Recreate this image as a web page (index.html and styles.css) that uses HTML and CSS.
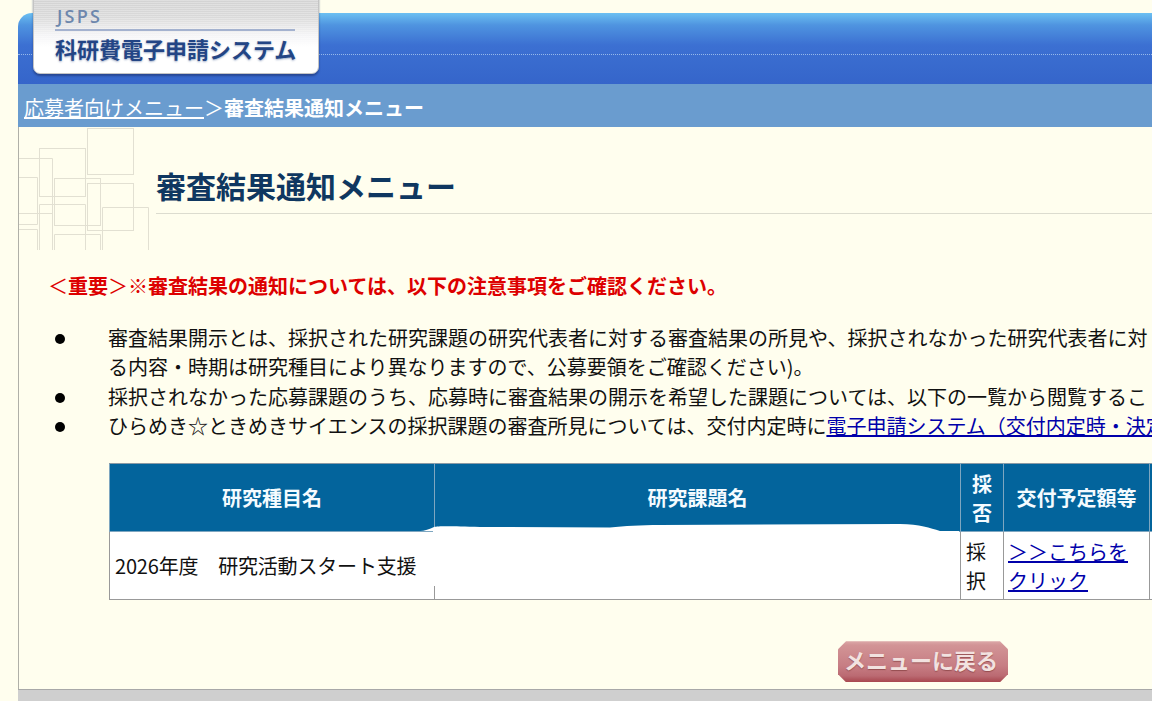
FILE: index.html
```html
<!DOCTYPE html>
<html lang="ja">
<head>
<meta charset="utf-8">
<title>審査結果通知メニュー</title>
<link rel="stylesheet" href="styles.css">
</head>
<body>
<div class="page">
  <header class="banner">
    <div class="logo">
      <div class="logo-org">JSPS</div>
      <div class="logo-name">科研費電子申請システム</div>
    </div>
    <div class="banner-dots"></div>
  </header>
  <nav class="crumbs"><a href="#">応募者向けメニュー</a>＞<strong>審査結果通知メニュー</strong></nav>
  <main class="content">
    <div class="title-row">
      <svg class="title-art" width="131" height="123" viewBox="0 0 131 123" fill="none" stroke="#e2e0d2" stroke-width="1">
        <rect x="68.5" y="1.5" width="46" height="46"/>
        <rect x="20.5" y="21.5" width="46" height="48"/>
        <path d="M0 31.5H33.5V123M0 86.5H33.5M0 50.5H18.5V97.5H0M0 102.5H18.5V123"/>
        <rect x="35.5" y="51.5" width="46" height="47"/>
        <rect x="68.5" y="56.5" width="46" height="47"/>
        <path d="M83.5 123V80.5H129.5V123M20.5 123V77.5H66.5V123M35.5 123V107.5H81.5V123"/>
      </svg>
      <h1 class="title">審査結果通知メニュー</h1>
    </div>
    <p class="notice"><span class="thin">＜</span>重要<span class="thin">＞※</span>審査結果の通知については、以下の注意事項をご確認ください。</p>
    <ul class="notes">
      <li><div>審査結果開示とは、採択された研究課題の研究代表者に対する審査結果の所見や、採択されなかった研究代表者に対<br>る内容・時期は研究種目により異なりますので、公募要領をご確認ください)。</div></li>
      <li><div>採択されなかった応募課題のうち、応募時に審査結果の開示を希望した課題については、以下の一覧から閲覧するこ</div></li>
      <li><div>ひらめき☆ときめきサイエンスの採択課題の審査所見については、交付内定時に<a href="#">電子申請システム（交付内定時・決定</a></div></li>
    </ul>
    <div class="table-wrap">
      <table class="results">
        <colgroup>
          <col class="c-type"><col class="c-name"><col class="c-res"><col class="c-amt"><col class="c-more">
        </colgroup>
        <thead>
          <tr><th>研究種目名</th><th>研究課題名</th><th>採否</th><th>交付予定額等</th><th></th></tr>
        </thead>
        <tbody>
          <tr>
            <td class="type-name">2026年度　研究活動スタート支援</td>
            <td></td>
            <td>採択</td>
            <td class="amount"><a href="#">＞＞こちらをクリック</a></td>
            <td></td>
          </tr>
        </tbody>
      </table>
      <svg class="redaction" width="540" height="76" viewBox="0 0 540 76">
        <path fill="#fff" d="M0 8C4 8 10 6 14 4C18 3 30 3 60 4L190 4.5C205 3 220 2 240 2L480 1C500 1 510 5 520 8L539 8L539 76L15.5 76L15.5 63L13 63L13 8Z"/>
      </svg>
    </div>
    <a class="back" href="#">メニューに戻る</a>
  </main>
  <footer class="foot"></footer>
</div>
</body>
</html>
```

FILE: styles.css
```css
html, body {
  margin: 0;
  height: 701px;
  overflow: hidden;
  background: #fffeee;
}
body {
  font-family: "Noto Sans CJK JP", "Noto Sans", sans-serif;
  font-size: 20px;
  color: #111;
}
.page {
  width: 1400px;
  margin-left: 18px;
  padding-top: 13px;
}
.banner {
  position: relative;
  height: 71px;
  border-top-left-radius: 14px;
  background: linear-gradient(#6cc0f2 0, #4f94e0 12px, #3c70d2 32px, #3565ca 71px);
}
.banner-dots {
  height: 41px;
  border-bottom: 1px dotted rgba(190, 215, 245, .7);
}
.logo {
  position: absolute;
  left: 15px;
  top: -25px;
  width: 286px;
  height: 86px;
  box-sizing: border-box;
  padding: 15px 22px 0 21px;
  border: 1px solid #c4c4c4;
  border-radius: 7px;
  background:
    repeating-linear-gradient(0deg, rgba(255,255,255,.28) 0 1px, transparent 1px 2px),
    linear-gradient(#cfcfcf 0, #d9d9d9 28px, #f4f4f6 46px, #fff 58px);
  box-shadow: 0 2px 2px rgba(30, 50, 110, .6);
}
.logo-org {
  font-family: "Open Sans", sans-serif;
  font-size: 18px;
  font-weight: 600;
  line-height: 25px;
  letter-spacing: 2.2px;
  color: #6d87ad;
  padding-left: 2px;
  border-bottom: 2px solid #a4b2cf;
  margin-right: 1px;
}
.logo-name {
  font-size: 22px;
  font-weight: 700;
  line-height: 34px;
  white-space: nowrap;
  color: #234585;
  text-shadow: 0 1px 2px rgba(40, 70, 130, .45);
}
.crumbs {
  height: 43px;
  line-height: 47px;
  padding-left: 6px;
  background: #6a9ccf;
  color: #fff;
  white-space: nowrap;
}
.crumbs a { color: #fff; }
.content {
  height: 562px;
  border-left: 1px solid #b0b0a8;
}
.title-row {
  display: flex;
  align-items: flex-start;
  height: 123px;
}
.title-art {
  flex: none;
  display: block;
  margin-right: 6px;
}
.title {
  flex: 1;
  margin: 0;
  height: 87px;
  box-sizing: border-box;
  padding-top: 36px;
  border-bottom: 1px solid #dcdccf;
  font-size: 30px;
  font-weight: 700;
  line-height: 44px;
  color: #0f3760;
  white-space: nowrap;
}
.notice {
  margin: 21px 0 0 29px;
  line-height: 30px;
  font-weight: 700;
  color: #dd0000;
  white-space: nowrap;
}
.thin { font-weight: 400; }
.notes {
  margin: 22px 0 0;
  padding: 0;
  list-style: none;
  line-height: 29.3px;
  white-space: nowrap;
}
.notes li {
  display: grid;
  grid-template-columns: 89px 1fr;
}
.notes li::before {
  content: "";
  width: 10px;
  height: 10px;
  margin: 11px 0 0 36px;
  border-radius: 50%;
  background: #000;
}
.notes a { color: #0000aa; }
.table-wrap {
  position: relative;
  margin: 23px 0 0 90px;
  width: 1200px;
}
.results {
  table-layout: fixed;
  border-collapse: collapse;
  width: 1200px;
  background: #fff;
}
.c-type { width: 325px; }
.c-name { width: 526px; }
.c-res { width: 43px; }
.c-amt { width: 146px; }
.results th, .results td {
  border: 1px solid #999;
  padding: 0 5px;
  line-height: 29px;
}
.results th {
  height: 68px;
  box-sizing: border-box;
  background: #03649c;
  color: #f4fbff;
  font-weight: 700;
  border-color: #7ea6c0;
  border-top-color: #8a9aa5;
}
.results td {
  height: 68px;
  box-sizing: border-box;
}
.results .type-name { letter-spacing: -.18px; white-space: nowrap; }
.results .amount { padding-left: 4px; }
.results a { color: #0000aa; }
.redaction {
  position: absolute;
  left: 311px;
  top: 60px;
}
.back {
  display: block;
  width: 170px;
  height: 41px;
  margin: 41px 0 0 819px;
  padding-right: 4px;
  box-sizing: border-box;
  clip-path: polygon(8px 0, 162px 0, 170px 8px, 170px 33px, 162px 41px, 8px 41px, 0 33px, 0 8px);
  background: linear-gradient(#dca9a9 0, #d29496 10%, #c77e84 60%, #bb6a72 85%, #a8474f 100%);
  color: #f2e2e0;
  font-size: 22px;
  font-weight: 700;
  line-height: 37px;
  text-align: center;
  text-decoration: none;
  text-shadow: 0 1px 1px rgba(120, 50, 50, .6);
  white-space: nowrap;
}
.foot {
  height: 40px;
  background: #cfcfcf;
  border-top: 1px solid #a8a8a8;
}
```
